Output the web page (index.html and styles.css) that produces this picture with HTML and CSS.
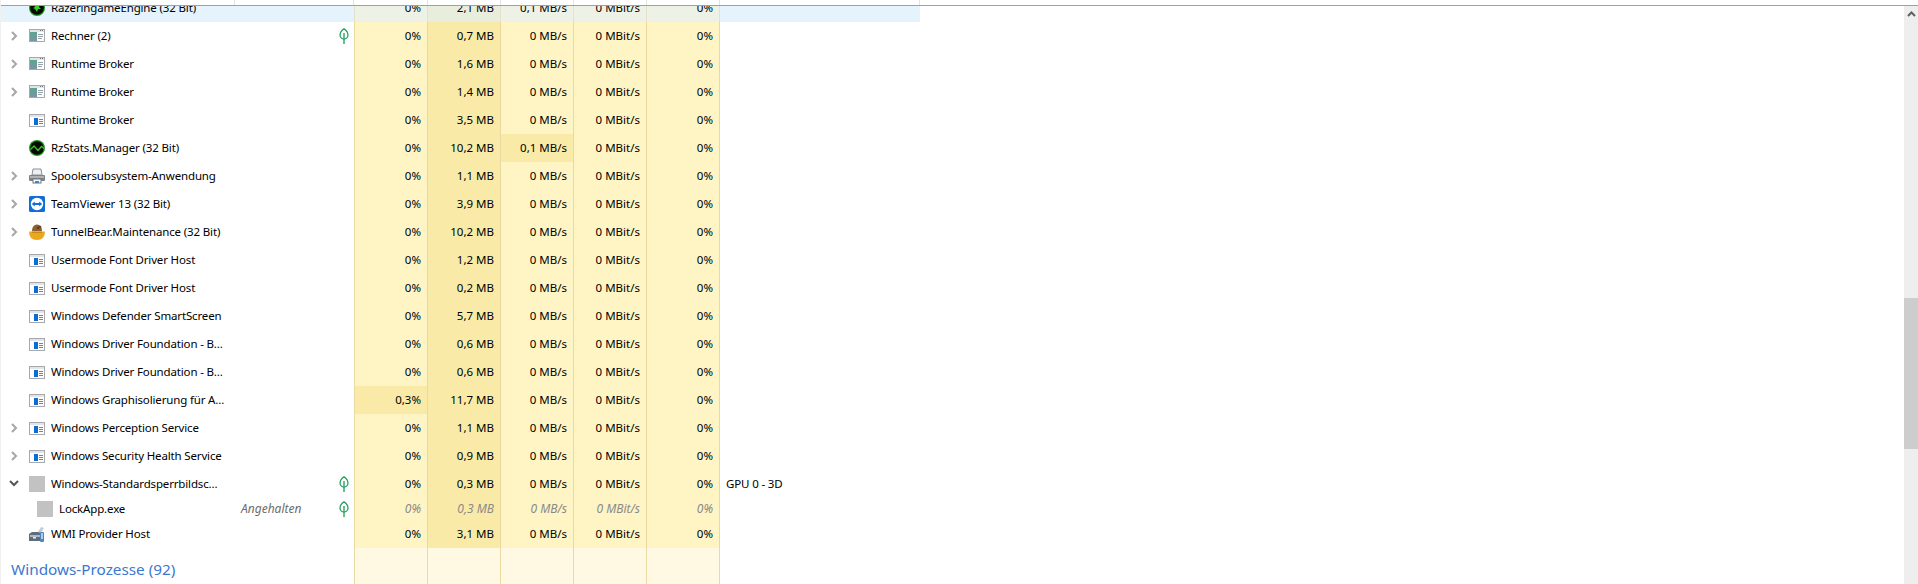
FILE: index.html
```html
<!DOCTYPE html>
<html lang="de">
  <head>
    <meta charset="UTF-8" />
    <title>Task-Manager</title>
    <link rel="stylesheet" href="styles.css">
  </head>
  <body>
    <svg class="defs" width="0" height="0">
      <defs>
        <linearGradient id="appGreen" x1="0" y1="0" x2="0" y2="1">
          <stop offset="0" stop-color="#5aa58f" />
          <stop offset="1" stop-color="#7d93a5" />
        </linearGradient>
        <symbol id="app" viewBox="0 0 16 16">
          <rect x="0" y="1" width="16" height="13" fill="#a4a9ad" />
          <rect x="1" y="2" width="14" height="2" fill="#e2e4e6" />
          <rect x="1" y="4" width="14" height="9" fill="#fff" />
          <rect x="1" y="4" width="7" height="9" fill="url(#appGreen)" />
          <path d="M9 6.500h5M9 8.500h5M9 10.500h4" stroke="#9aa3a8" />
          <path d="M11 2.500h1M13 2.500h1" stroke="#6f7478" />
        </symbol>
        <symbol id="win" viewBox="0 0 16 16">
          <rect x="0" y="2" width="16" height="13" fill="#a8a8ac" />
          <rect x="1" y="3" width="14" height="2" fill="#e4e4e6" />
          <rect x="1" y="5" width="14" height="9" fill="#fff" />
          <rect x="5" y="6" width="4" height="7" fill="#0a6ed1" />
          <path d="M10 7.500h4M10 9.500h4M10 11.500h4" stroke="#7d8288" />
        </symbol>
        <symbol id="razer" viewBox="0 0 16 16">
          <circle cx="8" cy="8" r="8" fill="#1f9a1f" />
          <circle cx="8" cy="8" r="6.800" fill="#050805" />
          <path d="M5 4l3 1 3-1-1 3 2 2-3 0-1 3-2-3-2-1 2-1z" fill="#3ecb2c" />
        </symbol>
        <symbol id="rzstats" viewBox="0 0 16 16">
          <circle cx="8" cy="8" r="8" fill="#1f9a1f" />
          <circle cx="8" cy="8" r="6.800" fill="#050805" />
          <path d="M1.500 9.500L5 6l4 4.500 3.500-4 2.500 2" fill="none" stroke="#35c52a" stroke-width="1.300" />
        </symbol>
        <symbol id="printer" viewBox="0 0 16 16">
          <path d="M4 1h8l1 6H3z" fill="#eef0f2" stroke="#8b9096" />
          <path d="M1 7h14q1 0 1 1v4q0 1-1 1H1q-1 0-1-1V8q0-1 1-1z" fill="#7d8389" />
          <rect x="1" y="8" width="14" height="2" fill="#aeb3b8" />
          <rect x="4" y="11" width="8" height="4" fill="#fff" stroke="#70767c" />
          <rect x="6" y="13" width="4" height="2" fill="#3b87c9" />
        </symbol>
        <symbol id="teamviewer" viewBox="0 0 16 16">
          <rect width="16" height="16" rx="1.500" fill="#0e6fd6" />
          <circle cx="8" cy="8" r="6.200" fill="#fff" />
          <path d="M2.800 8L5.800 5.600V7h4.400V5.600L13.200 8l-3 2.400V9H5.800v1.400z" fill="#0e6fd6" />
        </symbol>
        <symbol id="bear" viewBox="0 0 16 16">
          <path d="M3 7q0-6 5-6.500 5 .5 5 6.500z" fill="#8c5f2e" />
          <circle cx="11" cy="3" r="1.300" fill="#6a4520" />
          <circle cx="9" cy="4" r=".8" fill="#2b1a0a" />
          <path d="M0 7.500h16q0 8.500-8 8.500T0 7.500z" fill="#eca81d" />
          <path d="M3 7.500h10v1.500H3z" fill="#c88a16" />
        </symbol>
        <symbol id="wmi" viewBox="0 0 16 16">
          <path d="M0 8l3-2h9v9H0z" fill="#5f6c7a" />
          <path d="M1 9h10v2H1z" fill="#aeb9c4" />
          <rect x="4" y="11" width="3" height="1.500" fill="#e8edf2" />
          <path d="M9 6l3-5 3 1-3 5z" fill="#c7ccd2" />
          <rect x="11" y="6" width="4" height="10" rx="1" fill="#4b86c0" />
          <rect x="12" y="7" width="2" height="6" fill="#a9cdea" />
        </symbol>
        <symbol id="leaf" viewBox="0 0 10 16">
          <path d="M5 .8C2.600 2.600 1 4.600 1 7c0 2.200 1.700 4 4 4s4-1.800 4-4C9 4.600 7.400 2.600 5 .8z" fill="#fff" stroke="#1c9a55" stroke-width="1.200" />
          <path d="M5 5v11" stroke="#1c9a55" stroke-width="1.300" />
        </symbol>
      </defs>
    </svg>

    <div class="page">
      <div class="ticks">
        <span></span><span></span><span></span><span></span><span></span><span></span><span></span><span></span>
      </div>
      <div class="content">
        <div class="list">
          <div class="row selected first">
            <div class="name"><i class="slot"></i><svg class="ico"><use href="#razer" /></svg><span class="label">RazeringameEngine (32 Bit)</span></div>
            <div class="num">0%</div><div class="num mem">2,1 MB</div><div class="num">0,1 MB/s</div><div class="num">0 MBit/s</div><div class="num">0%</div><div class="engine"></div>
          </div>
          <div class="row">
            <div class="name"><i class="slot"><svg class="chev"><path d="M1 1l4 4-4 4" /></svg></i><svg class="ico"><use href="#app" /></svg><span class="label">Rechner (2)</span><svg class="leaf"><use href="#leaf" /></svg></div>
            <div class="num">0%</div><div class="num mem">0,7 MB</div><div class="num">0 MB/s</div><div class="num">0 MBit/s</div><div class="num">0%</div><div class="engine"></div>
          </div>
          <div class="row">
            <div class="name"><i class="slot"><svg class="chev"><path d="M1 1l4 4-4 4" /></svg></i><svg class="ico"><use href="#app" /></svg><span class="label">Runtime Broker</span></div>
            <div class="num">0%</div><div class="num mem">1,6 MB</div><div class="num">0 MB/s</div><div class="num">0 MBit/s</div><div class="num">0%</div><div class="engine"></div>
          </div>
          <div class="row">
            <div class="name"><i class="slot"><svg class="chev"><path d="M1 1l4 4-4 4" /></svg></i><svg class="ico"><use href="#app" /></svg><span class="label">Runtime Broker</span></div>
            <div class="num">0%</div><div class="num mem">1,4 MB</div><div class="num">0 MB/s</div><div class="num">0 MBit/s</div><div class="num">0%</div><div class="engine"></div>
          </div>
          <div class="row">
            <div class="name"><i class="slot"></i><svg class="ico"><use href="#win" /></svg><span class="label">Runtime Broker</span></div>
            <div class="num">0%</div><div class="num mem">3,5 MB</div><div class="num">0 MB/s</div><div class="num">0 MBit/s</div><div class="num">0%</div><div class="engine"></div>
          </div>
          <div class="row">
            <div class="name"><i class="slot"></i><svg class="ico"><use href="#rzstats" /></svg><span class="label">RzStats.Manager (32 Bit)</span></div>
            <div class="num">0%</div><div class="num mem">10,2 MB</div><div class="num hot">0,1 MB/s</div><div class="num">0 MBit/s</div><div class="num">0%</div><div class="engine"></div>
          </div>
          <div class="row">
            <div class="name"><i class="slot"><svg class="chev"><path d="M1 1l4 4-4 4" /></svg></i><svg class="ico"><use href="#printer" /></svg><span class="label">Spoolersubsystem-Anwendung</span></div>
            <div class="num">0%</div><div class="num mem">1,1 MB</div><div class="num">0 MB/s</div><div class="num">0 MBit/s</div><div class="num">0%</div><div class="engine"></div>
          </div>
          <div class="row">
            <div class="name"><i class="slot"><svg class="chev"><path d="M1 1l4 4-4 4" /></svg></i><svg class="ico"><use href="#teamviewer" /></svg><span class="label">TeamViewer 13 (32 Bit)</span></div>
            <div class="num">0%</div><div class="num mem">3,9 MB</div><div class="num">0 MB/s</div><div class="num">0 MBit/s</div><div class="num">0%</div><div class="engine"></div>
          </div>
          <div class="row">
            <div class="name"><i class="slot"><svg class="chev"><path d="M1 1l4 4-4 4" /></svg></i><svg class="ico"><use href="#bear" /></svg><span class="label">TunnelBear.Maintenance (32 Bit)</span></div>
            <div class="num">0%</div><div class="num mem">10,2 MB</div><div class="num">0 MB/s</div><div class="num">0 MBit/s</div><div class="num">0%</div><div class="engine"></div>
          </div>
          <div class="row">
            <div class="name"><i class="slot"></i><svg class="ico"><use href="#win" /></svg><span class="label">Usermode Font Driver Host</span></div>
            <div class="num">0%</div><div class="num mem">1,2 MB</div><div class="num">0 MB/s</div><div class="num">0 MBit/s</div><div class="num">0%</div><div class="engine"></div>
          </div>
          <div class="row">
            <div class="name"><i class="slot"></i><svg class="ico"><use href="#win" /></svg><span class="label">Usermode Font Driver Host</span></div>
            <div class="num">0%</div><div class="num mem">0,2 MB</div><div class="num">0 MB/s</div><div class="num">0 MBit/s</div><div class="num">0%</div><div class="engine"></div>
          </div>
          <div class="row">
            <div class="name"><i class="slot"></i><svg class="ico"><use href="#win" /></svg><span class="label">Windows Defender SmartScreen</span></div>
            <div class="num">0%</div><div class="num mem">5,7 MB</div><div class="num">0 MB/s</div><div class="num">0 MBit/s</div><div class="num">0%</div><div class="engine"></div>
          </div>
          <div class="row">
            <div class="name"><i class="slot"></i><svg class="ico"><use href="#win" /></svg><span class="label">Windows Driver Foundation - B...</span></div>
            <div class="num">0%</div><div class="num mem">0,6 MB</div><div class="num">0 MB/s</div><div class="num">0 MBit/s</div><div class="num">0%</div><div class="engine"></div>
          </div>
          <div class="row">
            <div class="name"><i class="slot"></i><svg class="ico"><use href="#win" /></svg><span class="label">Windows Driver Foundation - B...</span></div>
            <div class="num">0%</div><div class="num mem">0,6 MB</div><div class="num">0 MB/s</div><div class="num">0 MBit/s</div><div class="num">0%</div><div class="engine"></div>
          </div>
          <div class="row">
            <div class="name"><i class="slot"></i><svg class="ico"><use href="#win" /></svg><span class="label">Windows Graphisolierung für A...</span></div>
            <div class="num hot">0,3%</div><div class="num mem">11,7 MB</div><div class="num">0 MB/s</div><div class="num">0 MBit/s</div><div class="num">0%</div><div class="engine"></div>
          </div>
          <div class="row">
            <div class="name"><i class="slot"><svg class="chev"><path d="M1 1l4 4-4 4" /></svg></i><svg class="ico"><use href="#win" /></svg><span class="label">Windows Perception Service</span></div>
            <div class="num">0%</div><div class="num mem">1,1 MB</div><div class="num">0 MB/s</div><div class="num">0 MBit/s</div><div class="num">0%</div><div class="engine"></div>
          </div>
          <div class="row">
            <div class="name"><i class="slot"><svg class="chev"><path d="M1 1l4 4-4 4" /></svg></i><svg class="ico"><use href="#win" /></svg><span class="label">Windows Security Health Service</span></div>
            <div class="num">0%</div><div class="num mem">0,9 MB</div><div class="num">0 MB/s</div><div class="num">0 MBit/s</div><div class="num">0%</div><div class="engine"></div>
          </div>
          <div class="row">
            <div class="name"><i class="slot"><svg class="chev open"><path d="M1 1l4 4 4-4" /></svg></i><i class="blank"></i><span class="label">Windows-Standardsperrbildsc...</span><svg class="leaf"><use href="#leaf" /></svg></div>
            <div class="num">0%</div><div class="num mem">0,3 MB</div><div class="num">0 MB/s</div><div class="num">0 MBit/s</div><div class="num">0%</div><div class="engine">GPU 0 - 3D</div>
          </div>
          <div class="row child">
            <div class="name"><i class="slot"></i><i class="blank"></i><span class="label">LockApp.exe</span><span class="status">Angehalten</span><svg class="leaf"><use href="#leaf" /></svg></div>
            <div class="num">0%</div><div class="num mem">0,3 MB</div><div class="num">0 MB/s</div><div class="num">0 MBit/s</div><div class="num">0%</div><div class="engine"></div>
          </div>
          <div class="row">
            <div class="name"><i class="slot"></i><svg class="ico"><use href="#wmi" /></svg><span class="label">WMI Provider Host</span></div>
            <div class="num">0%</div><div class="num mem">3,1 MB</div><div class="num">0 MB/s</div><div class="num">0 MBit/s</div><div class="num">0%</div><div class="engine"></div>
          </div>
          <div class="row group">
            <div class="name"><span class="group-title">Windows-Prozesse (92)</span></div>
            <div class="num"></div><div class="num"></div><div class="num"></div><div class="num"></div><div class="num"></div><div class="engine"></div>
          </div>
        </div>
        <div class="scrollbar">
          <div class="scroll-up"><svg class="scroll-arrow"><path d="M1 5l3.500-3.500L8 5" /></svg></div>
          <div class="scroll-thumb"></div>
        </div>
      </div>
    </div>
  </body>
</html>
```

FILE: styles.css
```css
html,
body {
  margin: 0;
  padding: 0;
  height: 100%;
  overflow: hidden;
  background-color: #fff;
}

.defs {
  position: absolute;
}

.page {
  height: 584px;
  display: flex;
  flex-direction: column;
  box-sizing: border-box;
  border-left: 1px solid #f0f0f0;
  font-family: "Noto Sans", "Open Sans", sans-serif;
  font-size: 11.5px;
  color: #000;
}

.ticks {
  display: grid;
  grid-template-columns: 234px 119px 74px 73px 73px 73px 73px 200px;
  height: 5px;
  flex: none;
  border-bottom: 1px solid #a0a0a0;
}

.ticks span {
  border-right: 1px solid #e3e3e3;
}

.content {
  flex: 1;
  display: flex;
  min-height: 0;
}

.list {
  flex: 1;
  overflow: hidden;
}

.row {
  display: grid;
  grid-template-columns: 353px 74px 73px 73px 73px 73px 200px;
  width: 919px;
  height: 28px;
  line-height: 28px;
}

.row.first {
  margin-top: -12px;
}

.name {
  display: flex;
  align-items: center;
  white-space: nowrap;
}

.slot {
  width: 28px;
  flex: none;
  display: flex;
  justify-content: center;
}

.chev {
  width: 10px;
  height: 10px;
  margin-left: 1px;
  fill: none;
  stroke: #a6a6a6;
  stroke-width: 2;
}

.chev.open {
  stroke: #555;
  transform: translate(-2px, 1px);
}

.ico {
  width: 16px;
  height: 16px;
  flex: none;
  margin-right: 6px;
}

.blank {
  width: 16px;
  height: 16px;
  flex: none;
  margin-right: 6px;
  background-color: #c2c2c2;
}

.label {
  width: 182px;
  flex: none;
  overflow: hidden;
  letter-spacing: -0.15px;
}

.status {
  margin-left: 8px;
  font-size: 12px;
  font-style: italic;
  color: #6d6d6d;
}

.leaf {
  width: 10px;
  height: 16px;
  margin-left: auto;
  margin-right: 5px;
  flex: none;
}

.num {
  box-sizing: border-box;
  padding-right: 6px;
  text-align: right;
  white-space: nowrap;
  background-color: #fff4c4;
  border-right: 1px solid #ebd9a2;
}

.name + .num {
  border-left: 1px solid #ebd9a2;
}

.num.mem,
.num.hot {
  background-color: #f9eba7;
}

.engine {
  padding-left: 6px;
  letter-spacing: -0.15px;
}

.row.selected .name,
.row.selected .engine {
  background-color: #e5f3fd;
}

.row.selected .num {
  background-color: #eef1e6;
  border-color: #e4e2cc;
}

.row.selected .num.mem {
  background-color: #e9eddb;
}

.row.child {
  height: 22px;
  line-height: 22px;
}

.row.child .slot {
  width: 36px;
}

.row.child .label {
  width: 174px;
}

.row.child .num {
  font-size: 12px;
  font-style: italic;
  color: #8a8a8a;
}

.row.group {
  height: 40px;
  line-height: 42px;
}

.row.group .num {
  background-color: #fff8e2;
}

.group-title {
  margin-left: 10px;
  font-size: 15.300px;
  color: #3b78cf;
}

.scrollbar {
  width: 14px;
  flex: none;
  background-color: #eeeeee;
}

.scroll-up {
  height: 17px;
  display: flex;
  justify-content: center;
  align-items: center;
}

.scroll-arrow {
  width: 9px;
  height: 7px;
  fill: none;
  stroke: #606060;
  stroke-width: 2;
}

.scroll-thumb {
  height: 151px;
  margin-top: 275px;
  background-color: #cdcdcd;
}
```
